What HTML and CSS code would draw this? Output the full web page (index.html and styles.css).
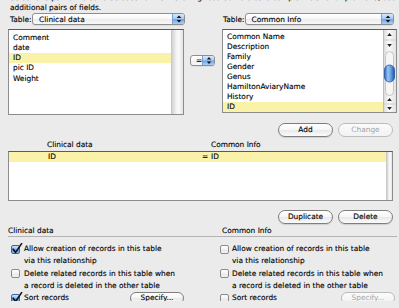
FILE: index.html
```html
<!DOCTYPE html>
<html>
<head>
<meta charset="utf-8">
<link rel="stylesheet" href="styles.css">
</head>
<body>
<div class="win">
  <p class="intro">Select one pair of fields to be used to find matching records. To create complex relationship criteria, see<br>additional pairs of fields.</p>

  <div class="pick">
    <div class="side side-left">
      <div class="tablerow">
        <span class="lbl">Table:</span>
        <div class="popup">
          <span class="ptext">Clinical data</span>
          <span class="parrow"><svg width="10" height="10" viewBox="0 0 10 10"><path d="M5 1.5 L7.3 4 L2.7 4 Z M5 8.5 L7.3 6 L2.7 6 Z" fill="#111"/></svg></span>
        </div>
      </div>
      <div class="list list-left">
        <div class="rows">
          <div class="row">Comment</div>
          <div class="row">date</div>
          <div class="row sel">ID</div>
          <div class="row">pic ID</div>
          <div class="row">Weight</div>
        </div>
        <div class="track"></div>
      </div>
    </div>

    <div class="op">
      <div class="popup popup-op">
        <span class="ptext">=</span>
        <span class="parrow"><svg width="10" height="9" viewBox="0 0 10 9"><path d="M5 1 L7.2 3.6 L2.8 3.6 Z M5 8 L7.2 5.4 L2.8 5.4 Z" fill="#111"/></svg></span>
      </div>
    </div>

    <div class="side side-right">
      <div class="tablerow">
        <span class="lbl">Table:</span>
        <div class="popup">
          <span class="ptext">Common Info</span>
          <span class="parrow"><svg width="10" height="10" viewBox="0 0 10 10"><path d="M5 1.5 L7.3 4 L2.7 4 Z M5 8.5 L7.3 6 L2.7 6 Z" fill="#111"/></svg></span>
        </div>
      </div>
      <div class="list list-right">
        <div class="rows">
          <div class="row">Common Name</div>
          <div class="row">Description</div>
          <div class="row">Family</div>
          <div class="row">Gender</div>
          <div class="row">Genus</div>
          <div class="row">HamiltonAviaryName</div>
          <div class="row">History</div>
          <div class="row sel">ID</div>
        </div>
        <svg class="scroller" width="13" height="82" viewBox="0 0 13 82">
          <defs>
            <linearGradient id="trk" x1="0" x2="1" y1="0" y2="0">
              <stop offset="0" stop-color="#d6d6d6"/>
              <stop offset="0.45" stop-color="#fbfbfb"/>
              <stop offset="1" stop-color="#e2e2e2"/>
            </linearGradient>
            <linearGradient id="thumb" x1="0" x2="1" y1="0" y2="0">
              <stop offset="0" stop-color="#2c62b8"/>
              <stop offset="0.35" stop-color="#9cc6f4"/>
              <stop offset="0.6" stop-color="#6aa3e6"/>
              <stop offset="1" stop-color="#1f56aa"/>
            </linearGradient>
          </defs>
          <rect x="0" y="0" width="13" height="82" fill="url(#trk)"/>
          <line x1="0.5" y1="0" x2="0.5" y2="82" stroke="#bdbdbd"/>
          <path d="M6.5 3 L8.8 6 L4.2 6 Z" fill="#222"/>
          <path d="M6.5 17 L8.8 14 L4.2 14 Z" fill="#222"/>
          <line x1="1" y1="10" x2="13" y2="10" stroke="#d0d0d0"/>
          <rect x="2.5" y="21.5" width="8" height="44" rx="4" fill="#f6f6f6" stroke="#c4c4c4"/>
          <rect x="1.5" y="35" width="10" height="17" rx="5" fill="url(#thumb)" stroke="#23529c" stroke-width="0.8"/>
          <path d="M6.5 68 L8.8 71 L4.2 71 Z" fill="#222"/>
          <line x1="1" y1="74" x2="13" y2="74" stroke="#d0d0d0"/>
          <path d="M6.5 80 L8.8 77 L4.2 77 Z" fill="#222"/>
        </svg>
      </div>
    </div>
  </div>

  <div class="actions actions-top">
    <div class="btn">Add</div>
    <div class="btn off">Change</div>
  </div>

  <div class="crit-head">
    <span>Clinical data</span>
    <span></span>
    <span>Common Info</span>
  </div>
  <div class="crit">
    <div class="crit-rows">
      <div class="crit-row sel">
        <span>ID</span>
        <span>=</span>
        <span>ID</span>
      </div>
    </div>
    <div class="track"></div>
  </div>

  <div class="actions actions-mid">
    <div class="btn">Duplicate</div>
    <div class="btn">Delete</div>
  </div>

  <div class="opts">
    <div class="col col-left">
      <div class="col-head">Clinical data</div>
      <div class="opt">
        <span class="cb on"><svg width="12" height="12" viewBox="0 0 12 12"><path d="M2.2 6.2 L4.6 9.4 L10.6 0.6" fill="none" stroke="#111" stroke-width="1.6" stroke-linecap="round" stroke-linejoin="round"/></svg></span>
        <span class="otext">Allow creation of records in this table<br>via this relationship</span>
      </div>
      <div class="opt">
        <span class="cb"></span>
        <span class="otext">Delete related records in this table when<br>a record is deleted in the other table</span>
      </div>
      <div class="opt opt-sort">
        <span class="cb on"><svg width="12" height="12" viewBox="0 0 12 12"><path d="M2.2 6.2 L4.6 9.4 L10.6 0.6" fill="none" stroke="#111" stroke-width="1.6" stroke-linecap="round" stroke-linejoin="round"/></svg></span>
        <span class="otext">Sort records</span>
        <div class="btn btn-small">Specify...</div>
      </div>
    </div>
    <div class="col col-right">
      <div class="col-head">Common Info</div>
      <div class="opt">
        <span class="cb"></span>
        <span class="otext">Allow creation of records in this table<br>via this relationship</span>
      </div>
      <div class="opt">
        <span class="cb"></span>
        <span class="otext">Delete related records in this table when<br>a record is deleted in the other table</span>
      </div>
      <div class="opt opt-sort">
        <span class="cb"></span>
        <span class="otext">Sort records</span>
        <div class="btn btn-small off">Specify...</div>
      </div>
    </div>
  </div>
</div>
</body>
</html>
```

FILE: styles.css
```css
html, body {
  margin: 0;
  padding: 0;
  background: #ebebeb;
  overflow: hidden;
}

body {
  font-family: "DejaVu Sans", "Liberation Sans", sans-serif;
  font-size: 7.4px;
  color: #000;
  -webkit-text-stroke: 0.12px #000;
}

.win {
  width: 399px;
  height: 308px;
  padding-left: 8px;
  box-sizing: border-box;
}

.intro {
  margin: -7px 0 0 2px;
  line-height: 10px;
  white-space: nowrap;
}

/* top picker */
.pick {
  display: flex;
  align-items: flex-start;
}

.side-left { width: 177px; }
.side-right { width: 175px; }

.tablerow {
  display: flex;
  align-items: center;
  height: 12px;
}

.side-left .lbl { padding-left: 2px; }
.side-right .lbl { padding-left: 1px; }
.side-left .popup { margin-left: 0.5px; }
.side-right .popup { margin-right: 3px; }

.popup {
  flex: 1;
  height: 12px;
  box-sizing: border-box;
  display: flex;
  align-items: center;
  border: 1px solid #8e8e8e;
  border-radius: 3px;
  background: linear-gradient(#ffffff, #f7f7f7 50%, #ececec 51%, #f8f8f8);
  box-shadow: 0 1px 0 rgba(0,0,0,0.06);
  overflow: hidden;
}

.ptext {
  flex: 1;
  padding-left: 6px;
  white-space: nowrap;
}

.parrow {
  width: 11px;
  height: 100%;
  display: flex;
  align-items: center;
  justify-content: center;
  border-left: 1px solid #7c9fcf;
  background: linear-gradient(#d7e9fc, #a7cbf2 45%, #6ea6e8 55%, #a9d0f7);
}

.op {
  width: 37px;
  padding-top: 42px;
  padding-left: 5px;
  box-sizing: border-box;
}

.popup-op {
  width: 25px;
  height: 11px;
  flex: none;
}

.popup-op .ptext { padding-left: 5px; }

/* lists */
.list {
  margin-top: 4px;
  display: flex;
  box-sizing: border-box;
  border: 1px solid #8c8c8c;
  border-top-color: #5a5a5a;
  background: #fff;
}

.list-left { width: 176px; height: 86px; }
.list-right { width: 175px; height: 84px; }

.rows {
  flex: 1;
  padding-top: 2px;
}

.row {
  height: 10px;
  line-height: 10px;
  padding-left: 4px;
  white-space: nowrap;
}

.list-left .rows { padding-top: 2.5px; }
.list-left .row { height: 10.25px; line-height: 10.25px; }

.sel {
  background: #fbf2a9;
}

.track {
  width: 11px;
  background: linear-gradient(to right, #d2d2d2, #f3f3f3 40%, #fbfbfb 60%, #e3e3e3);
  border-left: 1px solid #c8c8c8;
}

.scroller {
  display: block;
  flex: none;
}

/* buttons */
.actions {
  display: flex;
  justify-content: flex-end;
  gap: 5px;
  padding-right: 3px;
}

.actions-top { margin-top: 8px; width: 388px; box-sizing: border-box; }
.actions-mid { margin-top: 9px; width: 388px; box-sizing: border-box; }

.btn {
  width: 55px;
  height: 14px;
  box-sizing: border-box;
  border: 1px solid #7e7e7e;
  border-radius: 7px;
  background: linear-gradient(#ffffff, #f6f6f6 50%, #e8e8e8 51%, #fbfbfb);
  box-shadow: 0 1px 1px rgba(0,0,0,0.12);
  text-align: center;
  line-height: 12px;
  white-space: nowrap;
}

.btn.off {
  border-color: #bcbcbc;
  color: #a3a3a3;
  -webkit-text-stroke: 0;
  box-shadow: none;
  background: linear-gradient(#fbfbfb, #f2f2f2);
}

/* criteria */
.crit-head, .crit-row {
  display: grid;
  grid-template-columns: 154px 9px 1fr;
  padding-left: 39px;
}

.crit-head {
  margin-top: 2px;
  height: 11px;
  line-height: 11px;
}

.crit-head span:last-child { padding-left: 1px; }

.crit {
  margin-top: 1px;
  width: 385px;
  height: 50px;
  box-sizing: border-box;
  display: flex;
  border: 1px solid #8c8c8c;
  border-top-color: #5a5a5a;
  background: #fff;
}

.crit-rows { flex: 1; }
.crit .track { width: 5px; }

.crit-row {
  height: 10px;
  line-height: 10px;
}

/* options */
.opts {
  margin-top: 1.5px;
  width: 389px;
  display: grid;
  grid-template-columns: 209px 180px;
}

.col-head {
  height: 10px;
  line-height: 10px;
  border-bottom: 1px solid #b3b3b3;
  margin-bottom: 6.5px;
}

.col-right .col-head { padding-left: 5px; }

.col-left .opt { padding-left: 3px; padding-right: 33px; }
.col-right .opt { padding-left: 3px; padding-right: 2px; }

.opt {
  display: flex;
  align-items: flex-start;
  line-height: 12px;
  margin-bottom: 0.5px;
  white-space: nowrap;
}

.cb {
  flex: none;
  position: relative;
  width: 9px;
  height: 9px;
  margin-top: 1.5px;
  margin-right: 4px;
  box-sizing: border-box;
  border: 1px solid #8a8a8a;
  border-radius: 2px;
  background: linear-gradient(#ffffff, #f1f1f1 50%, #e2e2e2 51%, #f7f7f7);
}

.col-right .cb { margin-right: 3px; }

.cb.on {
  border-color: #3e66a3;
  background: linear-gradient(#cfe3fa, #8fbdf0 45%, #4f8fe0 55%, #8cc0f5);
}

.cb svg {
  position: absolute;
  left: -1px;
  top: -3px;
}

.opt-sort { align-items: center; }
.opt-sort .cb { margin-top: 0; }

.btn-small {
  margin-left: auto;
  width: 54px;
  height: 12px;
  line-height: 10px;
  border-radius: 6px;
}
```
